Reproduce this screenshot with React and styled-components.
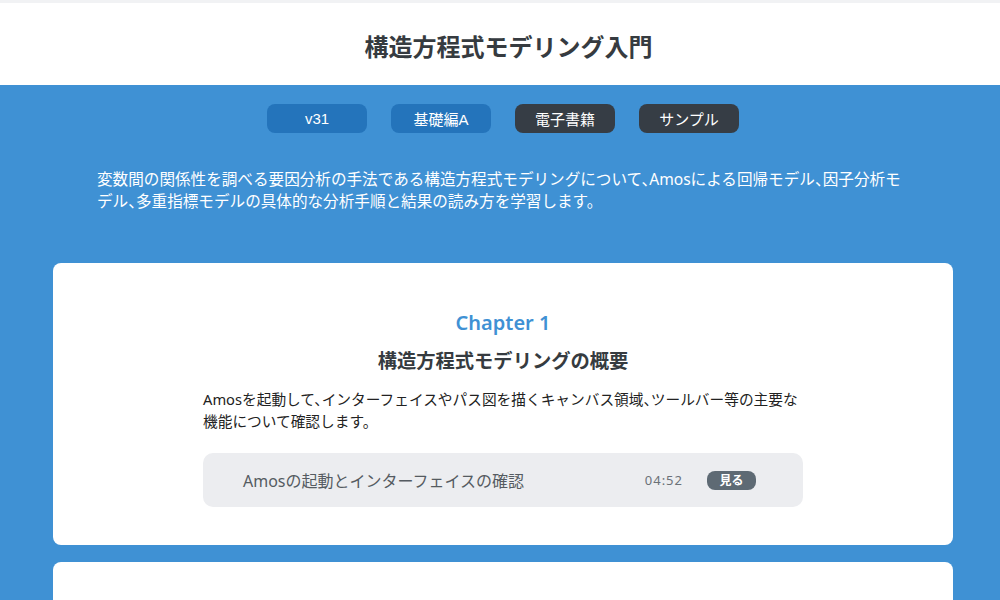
import React from "react";
import styled, { createGlobalStyle } from "styled-components";

const Global = createGlobalStyle`
  html, body { margin: 0; padding: 0; }
  body {
    background: #3f91d4;
    font-family: "Noto Sans", "Noto Sans CJK JP", sans-serif;
    color: #333;
    overflow: hidden;
  }
`;

const Page = styled.div`
  min-height: 600px;
  background: #3f91d4;
  border-top: 3px solid #f1f2f4;
  padding-left: 6px;
`;

const Header = styled.header`
  background: #fff;
  height: 82px;
  margin-left: -6px;
  padding-left: 6px;
  display: flex;
  align-items: center;
  justify-content: center;
`;

const Title = styled.h1`
  margin: 0;
  padding: 2px 0 0 11px;
  font-size: 24px;
  font-weight: 700;
  color: #363b40;
`;

const Tags = styled.div`
  display: flex;
  justify-content: center;
  gap: 24px;
  padding-top: 19px;
`;

const Tag = styled.span`
  width: 100px;
  height: 29px;
  border-radius: 8px;
  display: flex;
  align-items: center;
  justify-content: center;
  font-family: "Liberation Sans", "Noto Sans CJK JP", sans-serif;
  font-size: 15px;
  color: #fff;
  background: ${(p) => (p.$dark ? "#363d45" : "#2474bb")};
`;

const Lead = styled.p`
  margin: 35px auto 0;
  width: 812px;
  font-size: 15.6px;
  line-height: 22px;
  color: #fff;
  font-feature-settings: "halt" 1;
`;

const Cards = styled.div`
  display: flex;
  flex-direction: column;
  gap: 17px;
  margin: 51px auto 0;
  width: 900px;
`;

const Card = styled.section`
  background: #fff;
  border-radius: 8px;
  min-height: 100px;
  padding: 46px 0 38px;
  display: flex;
  flex-direction: column;
  align-items: center;
`;

const Chapter = styled.div`
  font-size: 20px;
  font-weight: 600;
  color: #3f91d4;
  line-height: 28px;
`;

const Heading = styled.h2`
  margin: 10px 0 0;
  font-size: 19.3px;
  font-weight: 700;
  color: #363b40;
  line-height: 28px;
`;

const Body = styled.p`
  margin: 13px 0 0;
  width: 600px;
  font-size: 14.7px;
  line-height: 22px;
  color: #222;
  font-feature-settings: "halt" 1;
`;

const Lesson = styled.div`
  margin-top: 21px;
  width: 600px;
  height: 54px;
  box-sizing: border-box;
  background: #ecedf0;
  border-radius: 10px;
  display: flex;
  align-items: center;
  padding: 0 47px 0 40px;
`;

const LessonTitle = styled.span`
  flex: 1;
  font-size: 16px;
  color: #555b61;
`;

const Time = styled.span`
  font-size: 13px;
  color: #6b7178;
  letter-spacing: 1px;
  margin-right: 24px;
`;

const Watch = styled.span`
  width: 49px;
  height: 19px;
  border-radius: 8px;
  background: #5e6a74;
  color: #fff;
  font-size: 12px;
  font-weight: 700;
  display: flex;
  align-items: center;
  justify-content: center;
`;

export default function App() {
  return (
    <>
      <Global />
      <Page>
        <Header>
          <Title>構造方程式モデリング入門</Title>
        </Header>
        <Tags>
          <Tag>v31</Tag>
          <Tag>基礎編A</Tag>
          <Tag $dark>電子書籍</Tag>
          <Tag $dark>サンプル</Tag>
        </Tags>
        <Lead>
          変数間の関係性を調べる要因分析の手法である構造方程式モデリングについて、Amosによる回帰モデル、因子分析モデル、多重指標モデルの具体的な分析手順と結果の読み方を学習します。
        </Lead>
        <Cards>
          <Card>
            <Chapter>Chapter 1</Chapter>
            <Heading>構造方程式モデリングの概要</Heading>
            <Body>
              Amosを起動して、インターフェイスやパス図を描くキャンバス領域、ツールバー等の主要な機能について確認します。
            </Body>
            <Lesson>
              <LessonTitle>Amosの起動とインターフェイスの確認</LessonTitle>
              <Time>04:52</Time>
              <Watch>見る</Watch>
            </Lesson>
          </Card>
          <Card />
        </Cards>
      </Page>
    </>
  );
}
